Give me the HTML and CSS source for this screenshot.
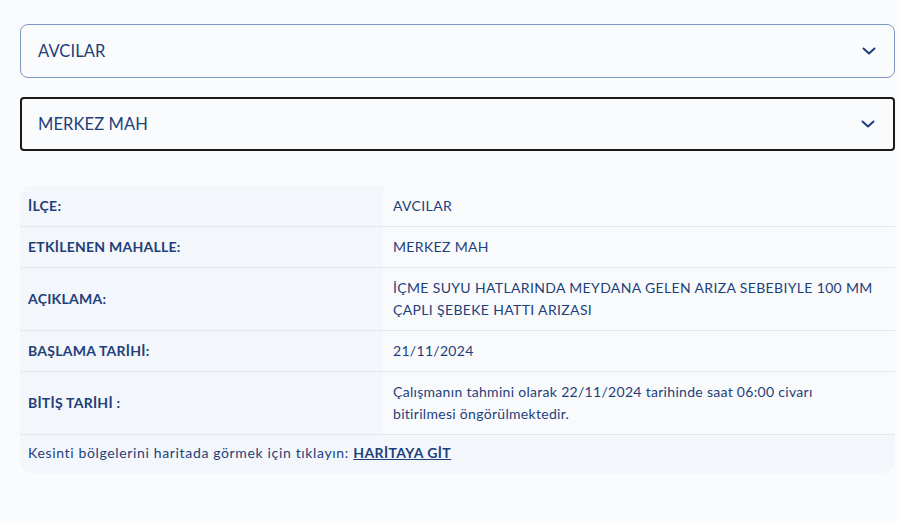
FILE: index.html
```html
<!DOCTYPE html>
<html lang="tr">
<head>
    <meta charset="UTF-8">
    <meta name="viewport" content="width=device-width, initial-scale=1.0">
    <title>Arıza Kesinti Bilgisi</title>
    <link rel="stylesheet" href="styles.css">
</head>
<body>

    <div class="page">
        <div class="select select-district">
            <span>AVCILAR</span>
            <svg class="chevron" width="18" height="18" viewBox="0 0 18 18"><path d="M3.5 6.5 L9 11.5 L14.5 6.5" fill="none" stroke="#1d3f7a" stroke-width="2" stroke-linecap="round" stroke-linejoin="round"/></svg>
        </div>

        <div class="select select-active">
            <span>MERKEZ MAH</span>
            <svg class="chevron" width="18" height="18" viewBox="0 0 18 18"><path d="M3.5 6.5 L9 11.5 L14.5 6.5" fill="none" stroke="#1d3f7a" stroke-width="2" stroke-linecap="round" stroke-linejoin="round"/></svg>
        </div>

        <div class="info">
            <table class="info-table">
                <tr>
                    <th>İLÇE:</th>
                    <td>AVCILAR</td>
                </tr>
                <tr>
                    <th>ETKİLENEN MAHALLE:</th>
                    <td>MERKEZ MAH</td>
                </tr>
                <tr>
                    <th>AÇIKLAMA:</th>
                    <td>İÇME SUYU HATLARINDA MEYDANA GELEN ARIZA SEBEBIYLE 100 MM ÇAPLI ŞEBEKE HATTI ARIZASI</td>
                </tr>
                <tr>
                    <th>BAŞLAMA TARİHİ:</th>
                    <td class="plain">21/11/2024</td>
                </tr>
                <tr>
                    <th>BİTİŞ TARİHİ :</th>
                    <td class="plain">Çalışmanın tahmini olarak 22/11/2024 tarihinde saat 06:00 civarı bitirilmesi öngörülmektedir.</td>
                </tr>
            </table>
            <div class="map-link">
                Kesinti bölgelerini haritada görmek için tıklayın: <a href="#">HARİTAYA GİT</a>
            </div>
        </div>
    </div>

</body>
</html>
```

FILE: styles.css
```css
body {
    font-family: Lato, "Noto Sans", sans-serif;
    background-color: #fafbfd;
    color: #1d3f7a;
    margin: 0;
    padding: 0;
}

.page {
    padding: 24px 5px 0 20px;
}

.select {
    display: flex;
    align-items: center;
    justify-content: space-between;
    height: 54px;
    box-sizing: border-box;
    padding: 0 16px 0 17px;
    font-size: 16.5px;
    letter-spacing: 0.1px;
    background: #fafbfd;
    margin-bottom: 19px;
}

.select-district {
    border: 1.5px solid #7e97c2;
    border-radius: 8px;
}

.select-active {
    border: 2px solid #1b1b1b;
    border-radius: 4px;
    padding-left: 16px;
    margin-bottom: 35px;
}

.chevron {
    display: block;
}

.info {
    background: #f3f6fa;
    border-radius: 12px;
    overflow: hidden;
}

.info-table {
    width: 100%;
    border-collapse: collapse;
    font-size: 14px;
    line-height: 22px;
}

    .info-table th,
    .info-table td {
        text-align: left;
        vertical-align: middle;
        padding: 9px 10px;
        border-bottom: 1px solid #e4e8ee;
    }

    .info-table th {
        width: 345px;
        padding-left: 8px;
        font-weight: 700;
        letter-spacing: 0.25px;
        background: #f3f6fa;
    }

    .info-table td {
        padding-right: 16px;
        background: #f9fafc;
        font-weight: 400;
        letter-spacing: 0.35px;
    }

        .info-table td.plain {
            letter-spacing: 0.3px;
        }

.map-link {
    padding: 8px 8px 10px;
    font-size: 14px;
    line-height: 20px;
    letter-spacing: 0.65px;
}

    .map-link a {
        color: #1d3f7a;
        font-weight: 700;
        letter-spacing: 0.4px;
        text-decoration: underline;
    }
```
